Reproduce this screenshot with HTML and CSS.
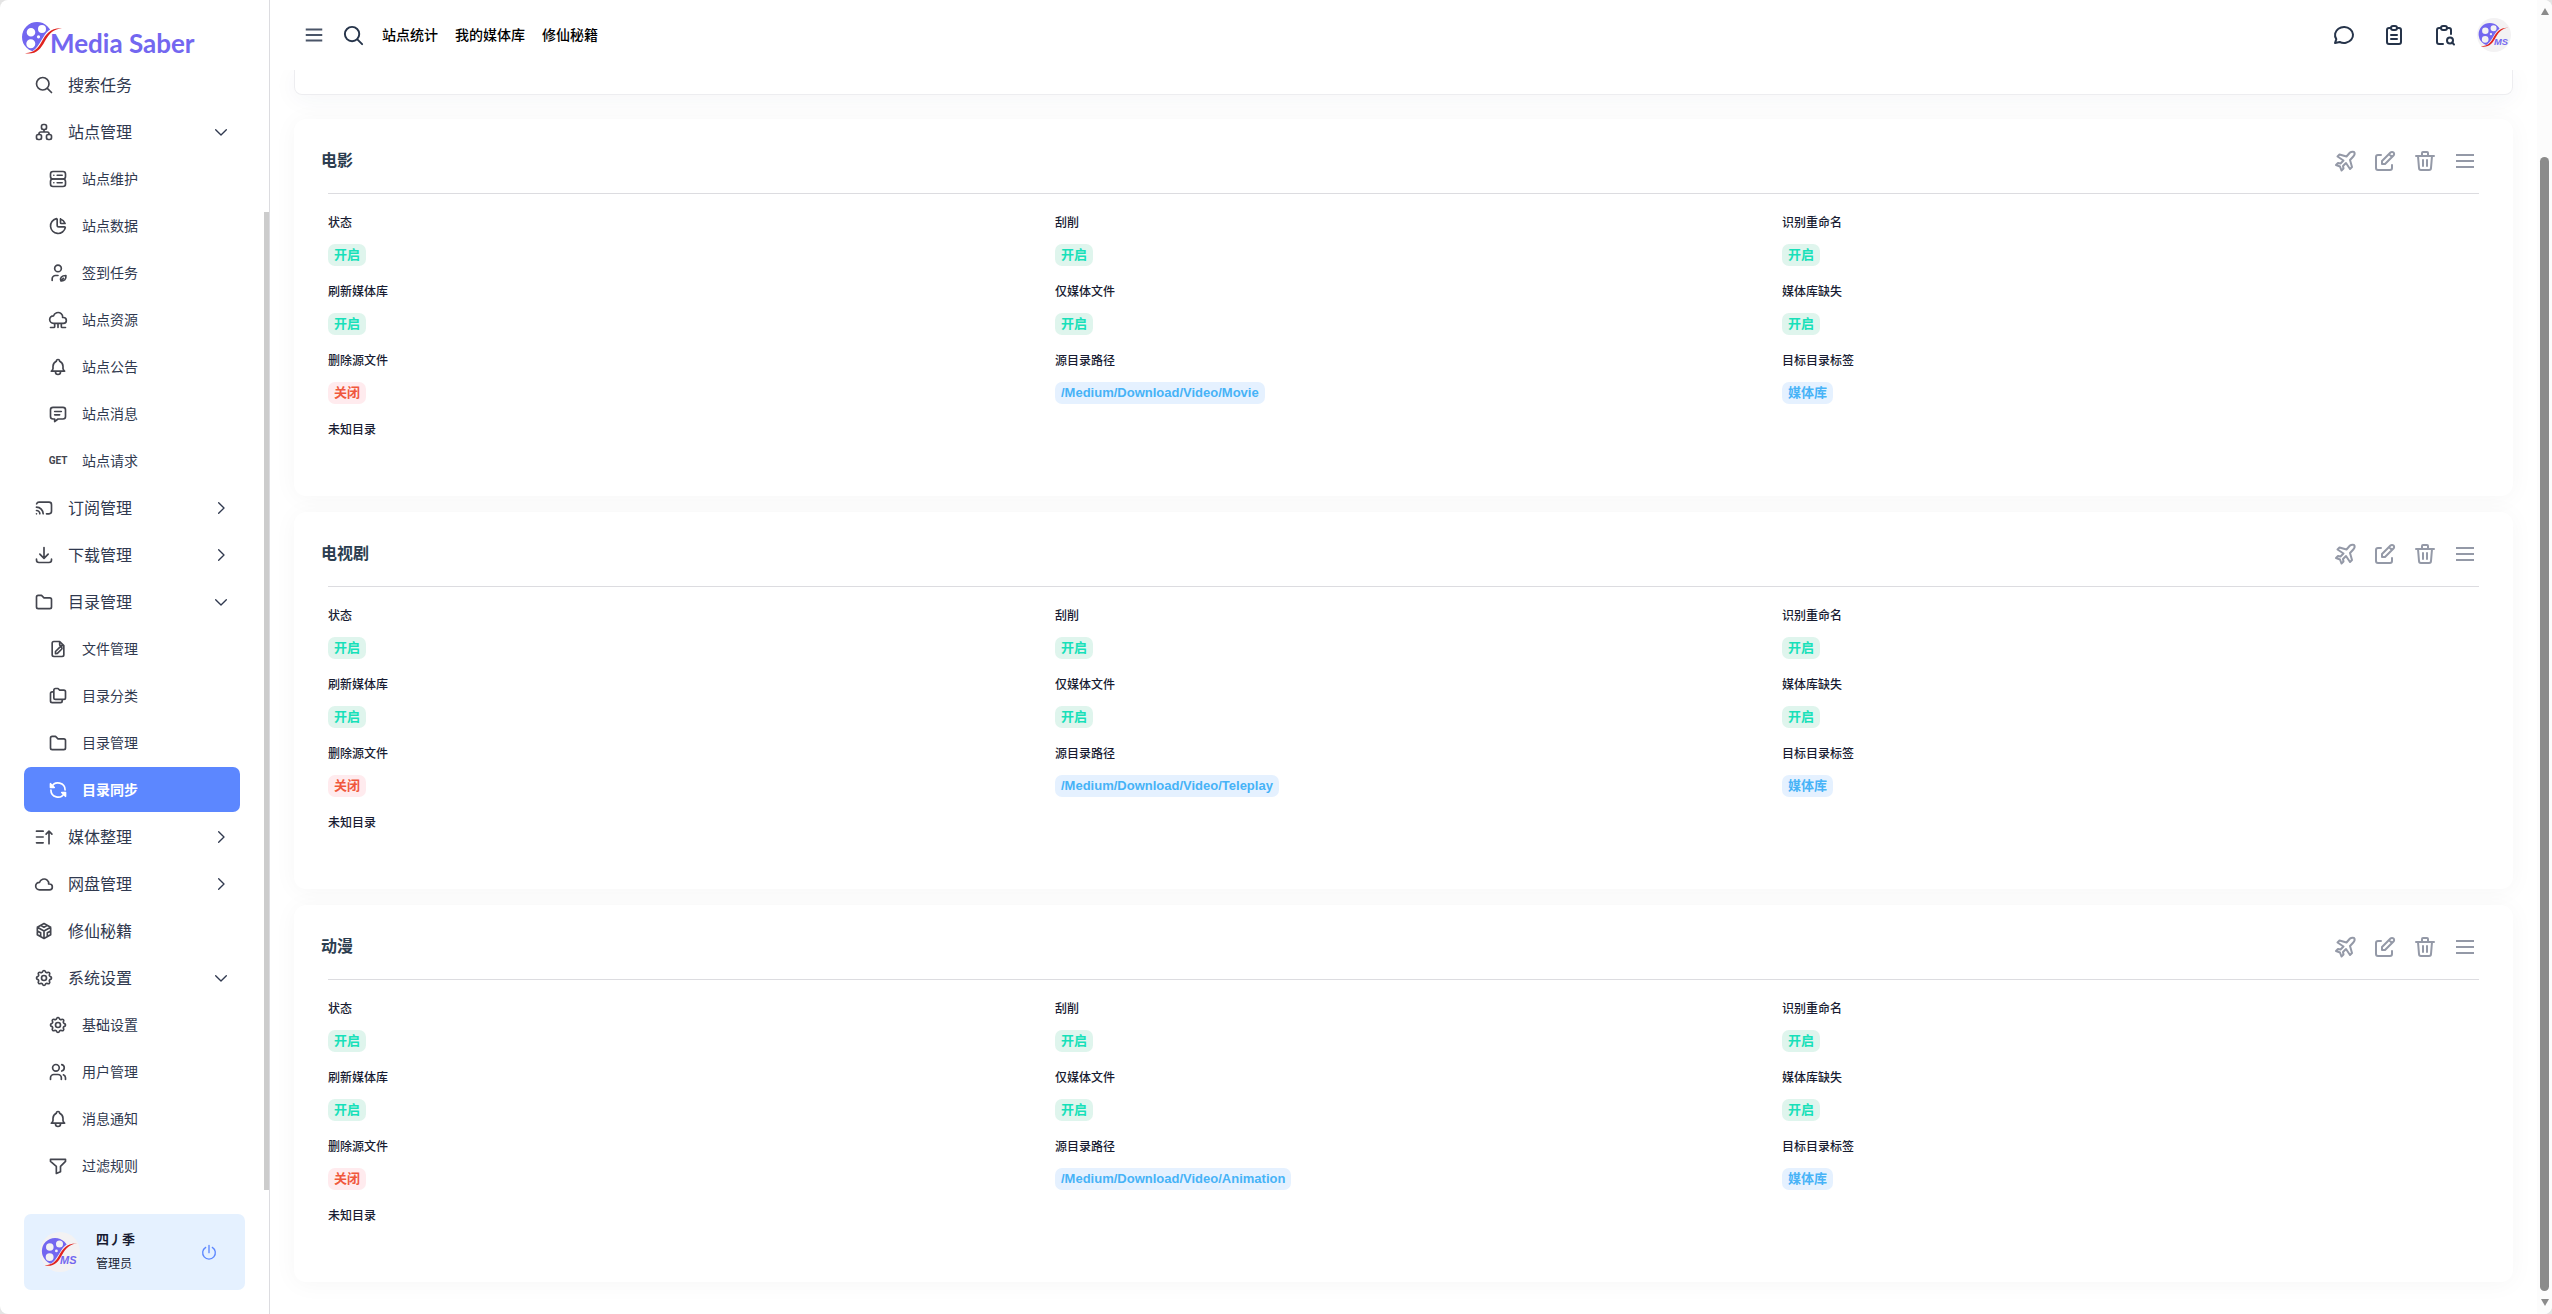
FILE: index.html
```html
<!DOCTYPE html>
<html lang="zh-CN">
<head>
    <meta charset="UTF-8">
    <meta name="viewport" content="width=device-width, initial-scale=1.0">
    <title>Media Saber</title>
    <link rel="stylesheet" href="styles.css">
</head>
<body>

<svg class="sprite" aria-hidden="true">
    <defs>
        <clipPath id="reelClip"><path d="M-2 -2H42V5C34 5 28 8 24 13.500C19 21 17 27 10 31H-2z"/></clipPath>
    </defs>
    <symbol id="reel" viewBox="0 0 42 34">
        <path clip-path="url(#reelClip)" fill="#7367f0" fill-rule="evenodd" d="M16 1a15 15 0 1 0 0 30a15 15 0 1 0 0 -30z M10 7a4.300 4.300 0 1 1 0 8.600a4.300 4.300 0 1 1 0 -8.600z M21 4a4 4 0 1 1 0 8a4 4 0 1 1 0 -8z M9.800 18.300a4.500 4.500 0 1 1 0 9a4.500 4.500 0 1 1 0 -9z M17.500 14.200a1.600 1.600 0 1 1 0 3.200a1.600 1.600 0 1 1 0 -3.200z"/>
        <path fill="#e0241f" d="M4 32.300C14 31.500 17 27 20.500 21C25 12.500 30 6.500 41 7.300C33 8 28.500 12 24 20C19.500 28.500 15 34 4 32.300z"/>
    </symbol>
    <symbol id="search" viewBox="0 0 24 24"><circle cx="10.500" cy="10.500" r="7.500"/><path d="M21 21l-5 -5"/></symbol>
    <symbol id="sitemap" viewBox="0 0 24 24"><rect x="3" y="15" width="6" height="6" rx="2"/><rect x="15" y="15" width="6" height="6" rx="2"/><rect x="9" y="3" width="6" height="6" rx="2"/><path d="M6 15v-1a2 2 0 0 1 2 -2h8a2 2 0 0 1 2 2v1M12 9v3"/></symbol>
    <symbol id="server" viewBox="0 0 24 24"><rect x="3" y="3" width="18" height="9" rx="3"/><rect x="3" y="12" width="18" height="9" rx="3"/><path d="M7 7.500v.01M7 16.500v.01M11 7.500h6M11 16.500h6"/></symbol>
    <symbol id="pie" viewBox="0 0 24 24"><path d="M10 3.200a9 9 0 1 0 10.800 10.800a1 1 0 0 0 -1 -1h-6.800a2 2 0 0 1 -2 -2v-7a.9 .9 0 0 0 -1 -.8M15 3.500a9 9 0 0 1 5.500 5.500h-4.500a1 1 0 0 1 -1 -1v-4.500"/></symbol>
    <symbol id="sign" viewBox="0 0 24 24"><circle cx="12" cy="6.500" r="4"/><path d="M5 21v-2a4 4 0 0 1 4 -4h3M15.500 21.500c-1.500 -3 .5 -6.500 6 -6.500c.5 4.500 -2 7 -6 6.500zM15.500 21.500l3 -3"/></symbol>
    <symbol id="cloud-net" viewBox="0 0 24 24"><path d="M6.657 16c-2.572 0 -4.657 -2.007 -4.657 -4.483c0 -2.475 2.085 -4.482 4.657 -4.482c.393 -1.762 1.794 -3.200 3.675 -3.773c1.880 -.572 3.956 -.193 5.444 1c1.488 1.190 2.162 3.007 1.770 4.769h.99c1.913 0 3.464 1.560 3.464 3.486c0 1.927 -1.551 3.487 -3.465 3.487h-11.878M12 16v5M16 16v4a1 1 0 0 0 1 1h4M8 16v4a1 1 0 0 1 -1 1h-4"/></symbol>
    <symbol id="bell" viewBox="0 0 24 24"><path d="M10 5a2 2 0 1 1 4 0a7 7 0 0 1 4 6v3a4 4 0 0 0 2 3h-16a4 4 0 0 0 2 -3v-3a7 7 0 0 1 4 -6M9 17v1a3 3 0 0 0 6 0v-1"/></symbol>
    <symbol id="message" viewBox="0 0 24 24"><path d="M8 9h8M8 13h6M18 4a3 3 0 0 1 3 3v8a3 3 0 0 1 -3 3h-6l-4 3v-3h-2a3 3 0 0 1 -3 -3v-8a3 3 0 0 1 3 -3z"/></symbol>
    <symbol id="cast" viewBox="0 0 24 24"><path d="M3 19v.01M7 19a4 4 0 0 0 -4 -4M11 19a8 8 0 0 0 -8 -8M15 19h3a3 3 0 0 0 3 -3v-8a3 3 0 0 0 -3 -3h-12a3 3 0 0 0 -2.800 2"/></symbol>
    <symbol id="download" viewBox="0 0 24 24"><path d="M3 17v1a3 3 0 0 0 3 3h12a3 3 0 0 0 3 -3v-1M7 11l5 5l5 -5M12 3v13"/></symbol>
    <symbol id="folder" viewBox="0 0 24 24"><path d="M5 4h4l3 3h7a2 2 0 0 1 2 2v9a2 2 0 0 1 -2 2h-14a2 2 0 0 1 -2 -2v-12a2 2 0 0 1 2 -2"/></symbol>
    <symbol id="file-edit" viewBox="0 0 24 24"><path d="M14 3v4a1 1 0 0 0 1 1h4M17 21h-10a2 2 0 0 1 -2 -2v-14a2 2 0 0 1 2 -2h7l5 5v11a2 2 0 0 1 -2 2zM9 17.500v-2.500l5 -5a1.500 1.500 0 0 1 2.300 2.300l-5 5z"/></symbol>
    <symbol id="folders" viewBox="0 0 24 24"><path d="M9 3h3l2 2h5a2 2 0 0 1 2 2v7a2 2 0 0 1 -2 2h-10a2 2 0 0 1 -2 -2v-9a2 2 0 0 1 2 -2M17 16v2a2 2 0 0 1 -2 2h-10a2 2 0 0 1 -2 -2v-9a2 2 0 0 1 2 -2h2"/></symbol>
    <symbol id="sync" viewBox="0 0 24 24"><path d="M4.500 8a8.500 8.500 0 0 1 16 4M19.500 16a8.500 8.500 0 0 1 -16 -4"/><path class="solid" d="M3 4.500v4.500h4.500zM21 19.500v-4.500h-4.500z"/></symbol>
    <symbol id="sort" viewBox="0 0 24 24"><path d="M3 5h8M3 12h8M3 19h8M18 5v15M14.500 8.500l3.500 -3.500l3.500 3.500"/></symbol>
    <symbol id="cloud" viewBox="0 0 24 24"><path d="M6.657 19c-2.572 0 -4.657 -2.007 -4.657 -4.483c0 -2.475 2.085 -4.482 4.657 -4.482c.393 -1.762 1.794 -3.200 3.675 -3.773c1.880 -.572 3.956 -.193 5.444 1c1.488 1.190 2.162 3.007 1.770 4.769h.99c1.913 0 3.464 1.560 3.464 3.486c0 1.927 -1.551 3.487 -3.465 3.487h-11.878"/></symbol>
    <symbol id="cube" viewBox="0 0 24 24"><path d="M20 7.500v9l-8 4.500l-8 -4.500v-9l8 -4.500zM12 12l8 -4.500M12 12v9M12 12l-8 -4.500M20 12l-4 2v4.750M4 12l4 2v4.750M8 5.250l4 2.250l4 -2.250"/></symbol>
    <symbol id="gear" viewBox="0 0 24 24"><path d="M10.325 4.317c.426 -1.756 2.924 -1.756 3.350 0a1.724 1.724 0 0 0 2.573 1.066c1.543 -.94 3.310 .826 2.370 2.370a1.724 1.724 0 0 0 1.065 2.572c1.756 .426 1.756 2.924 0 3.350a1.724 1.724 0 0 0 -1.066 2.573c.94 1.543 -.826 3.310 -2.370 2.370a1.724 1.724 0 0 0 -2.572 1.065c-.426 1.756 -2.924 1.756 -3.350 0a1.724 1.724 0 0 0 -2.573 -1.066c-1.543 .94 -3.310 -.826 -2.370 -2.370a1.724 1.724 0 0 0 -1.065 -2.572c-1.756 -.426 -1.756 -2.924 0 -3.350a1.724 1.724 0 0 0 1.066 -2.573c-.94 -1.543 .826 -3.310 2.370 -2.370c1 .608 2.296 .07 2.572 -1.065z"/><circle cx="12" cy="12" r="3"/></symbol>
    <symbol id="users" viewBox="0 0 24 24"><circle cx="9.500" cy="7" r="4"/><path d="M3 21v-2a4 4 0 0 1 4 -4h5a4 4 0 0 1 4 4v2M16.500 3.130a4 4 0 0 1 0 7.750M21 21v-2a4 4 0 0 0 -2.500 -3.700"/></symbol>
    <symbol id="filter" viewBox="0 0 24 24"><path d="M3 4h18v2.500l-6 6v6.500l-5 2v-8.500l-7 -6z"/></symbol>
    <symbol id="down" viewBox="0 0 24 24"><path d="M4 8.500l8 8l8 -8"/></symbol>
    <symbol id="right" viewBox="0 0 24 24"><path d="M8.500 4l8 8l-8 8"/></symbol>
    <symbol id="power" viewBox="0 0 24 24"><path d="M7 5a9.500 9.500 0 1 0 10 0M12 2v11"/></symbol>
    <symbol id="menu" viewBox="0 0 24 24"><path stroke-linecap="butt" d="M3 6h18M3 12h18M3 18h18"/></symbol>
    <symbol id="chat" viewBox="0 0 24 24"><path d="M3 20l1.300 -3.900c-2.324 -3.437 -1.426 -7.872 2.100 -10.374c3.526 -2.501 8.590 -2.296 11.845 .48c3.255 2.777 3.695 7.266 1.029 10.501c-2.666 3.235 -7.615 4.215 -11.574 2.293z"/></symbol>
    <symbol id="clip" viewBox="0 0 24 24"><path d="M9 5h-2a2 2 0 0 0 -2 2v12a2 2 0 0 0 2 2h10a2 2 0 0 0 2 -2v-12a2 2 0 0 0 -2 -2h-2M9 12h6M9 16h6"/><rect x="9" y="3" width="6" height="4" rx="2"/></symbol>
    <symbol id="clip-search" viewBox="0 0 24 24"><path d="M9 5h-2a2 2 0 0 0 -2 2v12a2 2 0 0 0 2 2h4M19 11v-4a2 2 0 0 0 -2 -2h-2M20 19.500l2 2"/><rect x="9" y="3" width="6" height="4" rx="2"/><circle cx="18" cy="17.500" r="3"/></symbol>
    <symbol id="plane" viewBox="0 0 24 24"><path d="M17 3.500c1.500 -1.200 4 -1 4.300 -.3c.5 1 .2 3 -1 4.300l-3.300 3.500l2 7l-2 2l-4 -6l-3 3l.5 2.500l-2 2l-1.500 -4l-4 -1.500l2 -2l2.500 .5l3 -3l-6 -4l2 -2l7 2z"/></symbol>
    <symbol id="edit" viewBox="0 0 24 24"><path d="M8 6h-3a2 2 0 0 0 -2 2v11a2 2 0 0 0 2 2h12a2 2 0 0 0 2 -2v-3"/><path d="M9 15v-3l8.500 -8.500a2.100 2.100 0 0 1 3 3l-8.500 8.500zM16 5l3 3"/></symbol>
    <symbol id="trash" viewBox="0 0 24 24"><path d="M3 7h18M10 11v6M14 11v6M5 7l1 12a2 2 0 0 0 2 2h8a2 2 0 0 0 2 -2l1 -12M9 7v-3a1 1 0 0 1 1 -1h4a1 1 0 0 1 1 1v3"/></symbol>
</svg>

<div class="app">
    <aside class="sidebar">
        <a class="logo" href="#"><svg class="logo-reel"><use href="#reel"/></svg><span>Media Saber</span></a>
        <div class="nav-wrap">
            <nav class="nav">
                <a class="item" href="#"><svg class="icon"><use href="#search"/></svg><span>搜索任务</span></a>
                <button class="item"><svg class="icon"><use href="#sitemap"/></svg><span>站点管理</span><svg class="arrow"><use href="#down"/></svg></button>
                <a class="item sub" href="#"><svg class="icon"><use href="#server"/></svg><span>站点维护</span></a>
                <a class="item sub" href="#"><svg class="icon"><use href="#pie"/></svg><span>站点数据</span></a>
                <a class="item sub" href="#"><svg class="icon"><use href="#sign"/></svg><span>签到任务</span></a>
                <a class="item sub" href="#"><svg class="icon"><use href="#cloud-net"/></svg><span>站点资源</span></a>
                <a class="item sub" href="#"><svg class="icon"><use href="#bell"/></svg><span>站点公告</span></a>
                <a class="item sub" href="#"><svg class="icon"><use href="#message"/></svg><span>站点消息</span></a>
                <a class="item sub" href="#"><b class="icon get">GET</b><span>站点请求</span></a>
                <button class="item"><svg class="icon"><use href="#cast"/></svg><span>订阅管理</span><svg class="arrow"><use href="#right"/></svg></button>
                <button class="item"><svg class="icon"><use href="#download"/></svg><span>下载管理</span><svg class="arrow"><use href="#right"/></svg></button>
                <button class="item"><svg class="icon"><use href="#folder"/></svg><span>目录管理</span><svg class="arrow"><use href="#down"/></svg></button>
                <a class="item sub" href="#"><svg class="icon"><use href="#file-edit"/></svg><span>文件管理</span></a>
                <a class="item sub" href="#"><svg class="icon"><use href="#folders"/></svg><span>目录分类</span></a>
                <a class="item sub" href="#"><svg class="icon"><use href="#folder"/></svg><span>目录管理</span></a>
                <a class="item sub active" href="#"><svg class="icon"><use href="#sync"/></svg><span>目录同步</span></a>
                <button class="item"><svg class="icon"><use href="#sort"/></svg><span>媒体整理</span><svg class="arrow"><use href="#right"/></svg></button>
                <button class="item"><svg class="icon"><use href="#cloud"/></svg><span>网盘管理</span><svg class="arrow"><use href="#right"/></svg></button>
                <a class="item" href="#"><svg class="icon"><use href="#cube"/></svg><span>修仙秘籍</span></a>
                <button class="item"><svg class="icon"><use href="#gear"/></svg><span>系统设置</span><svg class="arrow"><use href="#down"/></svg></button>
                <a class="item sub" href="#"><svg class="icon"><use href="#gear"/></svg><span>基础设置</span></a>
                <a class="item sub" href="#"><svg class="icon"><use href="#users"/></svg><span>用户管理</span></a>
                <a class="item sub" href="#"><svg class="icon"><use href="#bell"/></svg><span>消息通知</span></a>
                <a class="item sub" href="#"><svg class="icon"><use href="#filter"/></svg><span>过滤规则</span></a>
            </nav>
            <div class="nav-thumb"></div>
        </div>
        <div class="user">
            <svg class="user-avatar" viewBox="0 0 40 40">
                <circle cx="20" cy="20" r="20" fill="#f3f2f3"/>
                <use href="#reel" x="1" y="5" width="37" height="30"/>
                <text x="20" y="32" class="avatar-text">MS</text>
            </svg>
            <div class="user-info">
                <strong>四丿季</strong>
                <span>管理员</span>
            </div>
            <button class="logout" aria-label="退出"><svg><use href="#power"/></svg></button>
        </div>
    </aside>

    <main class="main">
        <header class="topbar">
            <button class="top-btn menu-btn" aria-label="菜单"><svg><use href="#menu"/></svg></button>
            <button class="top-btn search-btn" aria-label="搜索"><svg><use href="#search"/></svg></button>
            <a href="#">站点统计</a>
            <a href="#">我的媒体库</a>
            <a href="#">修仙秘籍</a>
            <div class="top-tools">
                <button class="top-btn" aria-label="消息"><svg><use href="#chat"/></svg></button>
                <button class="top-btn" aria-label="任务"><svg><use href="#clip"/></svg></button>
                <button class="top-btn" aria-label="日志"><svg><use href="#clip-search"/></svg></button>
                <button class="top-btn top-user" aria-label="用户">
                    <svg viewBox="0 0 40 40">
                        <circle cx="20" cy="20" r="20" fill="#f3f2f3"/>
                        <use href="#reel" x="1" y="5" width="37" height="30"/>
                        <text x="20" y="32" class="avatar-text">MS</text>
                    </svg>
                </button>
            </div>
        </header>

        <div class="content">
            <div class="toolbar-card"></div>

            <section class="card">
                <div class="card-head">
                    <h2>电影</h2>
                    <div class="actions">
                        <button aria-label="同步"><svg><use href="#plane"/></svg></button>
                        <button aria-label="编辑"><svg><use href="#edit"/></svg></button>
                        <button aria-label="删除"><svg><use href="#trash"/></svg></button>
                        <button aria-label="排序"><svg><use href="#menu"/></svg></button>
                    </div>
                </div>
                <dl class="fields">
                    <div><dt>状态</dt><dd class="badge on">开启</dd></div>
                    <div><dt>刮削</dt><dd class="badge on">开启</dd></div>
                    <div><dt>识别重命名</dt><dd class="badge on">开启</dd></div>
                    <div><dt>刷新媒体库</dt><dd class="badge on">开启</dd></div>
                    <div><dt>仅媒体文件</dt><dd class="badge on">开启</dd></div>
                    <div><dt>媒体库缺失</dt><dd class="badge on">开启</dd></div>
                    <div><dt>删除源文件</dt><dd class="badge off">关闭</dd></div>
                    <div><dt>源目录路径</dt><dd class="badge info">/Medium/Download/Video/Movie</dd></div>
                    <div><dt>目标目录标签</dt><dd class="badge info">媒体库</dd></div>
                    <div><dt>未知目录</dt></div>
                </dl>
            </section>

            <section class="card">
                <div class="card-head">
                    <h2>电视剧</h2>
                    <div class="actions">
                        <button aria-label="同步"><svg><use href="#plane"/></svg></button>
                        <button aria-label="编辑"><svg><use href="#edit"/></svg></button>
                        <button aria-label="删除"><svg><use href="#trash"/></svg></button>
                        <button aria-label="排序"><svg><use href="#menu"/></svg></button>
                    </div>
                </div>
                <dl class="fields">
                    <div><dt>状态</dt><dd class="badge on">开启</dd></div>
                    <div><dt>刮削</dt><dd class="badge on">开启</dd></div>
                    <div><dt>识别重命名</dt><dd class="badge on">开启</dd></div>
                    <div><dt>刷新媒体库</dt><dd class="badge on">开启</dd></div>
                    <div><dt>仅媒体文件</dt><dd class="badge on">开启</dd></div>
                    <div><dt>媒体库缺失</dt><dd class="badge on">开启</dd></div>
                    <div><dt>删除源文件</dt><dd class="badge off">关闭</dd></div>
                    <div><dt>源目录路径</dt><dd class="badge info">/Medium/Download/Video/Teleplay</dd></div>
                    <div><dt>目标目录标签</dt><dd class="badge info">媒体库</dd></div>
                    <div><dt>未知目录</dt></div>
                </dl>
            </section>

            <section class="card">
                <div class="card-head">
                    <h2>动漫</h2>
                    <div class="actions">
                        <button aria-label="同步"><svg><use href="#plane"/></svg></button>
                        <button aria-label="编辑"><svg><use href="#edit"/></svg></button>
                        <button aria-label="删除"><svg><use href="#trash"/></svg></button>
                        <button aria-label="排序"><svg><use href="#menu"/></svg></button>
                    </div>
                </div>
                <dl class="fields">
                    <div><dt>状态</dt><dd class="badge on">开启</dd></div>
                    <div><dt>刮削</dt><dd class="badge on">开启</dd></div>
                    <div><dt>识别重命名</dt><dd class="badge on">开启</dd></div>
                    <div><dt>刷新媒体库</dt><dd class="badge on">开启</dd></div>
                    <div><dt>仅媒体文件</dt><dd class="badge on">开启</dd></div>
                    <div><dt>媒体库缺失</dt><dd class="badge on">开启</dd></div>
                    <div><dt>删除源文件</dt><dd class="badge off">关闭</dd></div>
                    <div><dt>源目录路径</dt><dd class="badge info">/Medium/Download/Video/Animation</dd></div>
                    <div><dt>目标目录标签</dt><dd class="badge info">媒体库</dd></div>
                    <div><dt>未知目录</dt></div>
                </dl>
            </section>
        </div>
    </main>

    <div class="scrollbar" aria-hidden="true">
        <span class="scroll-up"></span>
        <div class="scroll-thumb"></div>
        <span class="scroll-down"></span>
    </div>
</div>

</body>
</html>
```

FILE: styles.css
```css
* {
    box-sizing: border-box;
}
body {
    margin: 0;
    background-color: #e4e4e4;
    font-family: "Liberation Sans", "Noto Sans CJK SC", sans-serif;
    color: #181c32;
}
a {
    color: inherit;
    text-decoration: none;
}
button {
    padding: 0;
    border: none;
    background: none;
    font: inherit;
    color: inherit;
    cursor: pointer;
}
svg {
    display: block;
    fill: none;
    stroke: currentColor;
    stroke-width: 2;
    stroke-linecap: round;
    stroke-linejoin: round;
}
.sprite {
    position: absolute;
    width: 0;
    height: 0;
}
.solid {
    fill: currentColor;
}
.app {
    display: flex;
    height: 100vh;
    background-color: #fff;
    border-radius: 8px;
    overflow: hidden;
}

/* sidebar */
.sidebar {
    display: flex;
    flex-direction: column;
    flex: none;
    width: 270px;
    border-right: 1px solid #dcdce0;
}
.logo {
    display: flex;
    align-items: flex-start;
    flex: none;
    height: 62px;
    padding: 21px 0 0 21px;
    color: #7367f0;
    font-family: Lato, sans-serif;
    font-size: 26px;
    font-weight: 700;
    line-height: 44px;
}
.logo-reel {
    width: 42px;
    height: 34px;
    margin-right: -13px;
    stroke: none;
}
.nav-wrap {
    display: flex;
    flex: 1;
    min-height: 0;
    overflow: hidden;
}
.nav {
    display: flex;
    flex-direction: column;
    gap: 2px;
    flex: 1;
    padding: 0 24px;
}
.nav-thumb {
    width: 5px;
    margin-top: 150px;
    background-color: #ccc;
}
.item {
    display: flex;
    align-items: center;
    flex: none;
    gap: 14px;
    height: 45px;
    padding: 0 11px 0 10px;
    border-radius: 7px;
    font-size: 16px;
    color: #30394f;
    text-align: left;
}
.item span {
    padding-bottom: 2px;
}
.item.sub {
    padding-left: 24px;
    font-size: 14px;
}
.item.active {
    background-color: #5c87ff;
    color: #fff;
    font-weight: 700;
}
.icon {
    width: 20px;
    height: 20px;
    flex: none;
    color: #43454e;
}
.active .icon {
    color: #fff;
}
.get {
    font-family: Roboto, sans-serif;
    font-size: 10px;
    line-height: 20px;
    text-align: center;
}
.arrow {
    width: 16px;
    height: 16px;
    margin-left: auto;
}
.user {
    display: flex;
    align-items: center;
    flex: none;
    height: 76px;
    margin: 24px;
    padding: 0 28px 0 16px;
    border-radius: 7px;
    background-color: #e5f1ff;
}
.user-avatar {
    width: 40px;
    height: 40px;
    margin-right: 16px;
    stroke: none;
}
.avatar-text {
    fill: #7367f0;
    font: italic 700 11px "Liberation Sans", sans-serif;
}
.user-info {
    display: flex;
    flex-direction: column;
    flex: 1;
    font-size: 12px;
    line-height: 24px;
}
.user-info strong {
    font-size: 13px;
}
.logout {
    color: #5c87ff;
}
.logout svg {
    width: 16px;
    height: 16px;
}

/* top bar */
.main {
    display: flex;
    flex-direction: column;
    flex: 1;
    min-width: 0;
}
.topbar {
    display: flex;
    align-items: center;
    gap: 17px;
    flex: none;
    height: 70px;
    padding: 0 26px 0 33px;
    background-color: #fff;
    font-size: 14px;
    font-weight: 500;
    color: #000;
    z-index: 1;
}
.topbar a {
    padding-bottom: 2px;
}
.top-btn {
    color: #26344a;
}
.top-btn svg {
    width: 24px;
    height: 24px;
}
.menu-btn {
    color: #4a5568;
}
.menu-btn svg {
    width: 22px;
    height: 22px;
}
.search-btn svg {
    width: 23px;
    height: 23px;
}
.top-tools {
    display: flex;
    align-items: center;
    gap: 26px;
    margin-left: auto;
}
.top-user {
    margin-left: -5px;
}
.top-user svg {
    width: 34px;
    height: 34px;
    stroke: none;
}

/* directory cards */
.content {
    display: flex;
    flex-direction: column;
    flex: 1;
    gap: 16px;
    padding: 0 24px;
    min-height: 0;
}
.toolbar-card {
    flex: none;
    height: 25px;
    margin-bottom: 8px;
    border: 1px solid #ededf0;
    border-top: none;
    border-radius: 0 0 8px 8px;
    box-shadow: 0 4px 24px rgba(40, 60, 90, 0.05);
}
.card {
    flex: none;
    padding: 0 34px 23px;
    background-color: #fff;
    border-radius: 12px;
    box-shadow: 0 2px 24px rgba(0, 0, 0, 0.04);
}
.card-head {
    display: flex;
    align-items: center;
    justify-content: space-between;
    height: 75px;
    padding: 9px 2px 0 0;
    border-bottom: 1px solid #dcdce0;
}
.card-head h2 {
    margin: 0 0 3px -7px;
    font-size: 16px;
    font-weight: 700;
    color: #2c3e50;
}
.actions {
    display: flex;
    gap: 16px;
    color: #9499a7;
}
.actions svg {
    width: 24px;
    height: 24px;
}
.fields {
    display: grid;
    grid-template-columns: repeat(3, 1fr);
    grid-auto-rows: 52px;
    gap: 17px 30px;
    margin: 20px 0 0;
}
.fields dt {
    font-size: 12px;
    font-weight: 500;
    line-height: 18px;
}
.badge {
    width: fit-content;
    margin: 12px 0 0;
    padding: 0 6px;
    border-radius: 7px;
    font-size: 13px;
    font-weight: 700;
    line-height: 22px;
}
.on {
    background-color: #dff5ed;
    color: #17e0b9;
}
.off {
    background-color: #ffebee;
    color: #f0583c;
}
.info {
    background-color: #e5f1ff;
    color: #47b3f7;
}

/* page scroll bar */
.scrollbar {
    display: flex;
    flex-direction: column;
    align-items: center;
    flex: none;
    width: 15px;
    padding: 8px 0;
    background-color: #fcfcfc;
}
.scroll-thumb {
    flex: 1;
    width: 9px;
    margin: 142px 0 8px;
    border-radius: 5px;
    background-color: #8b8b8b;
}
.scroll-up,
.scroll-down {
    border: 4px solid transparent;
}
.scroll-up {
    border-top: none;
    border-bottom: 7px solid #8b8b8b;
}
.scroll-down {
    border-bottom: none;
    border-top: 7px solid #8b8b8b;
}
```
